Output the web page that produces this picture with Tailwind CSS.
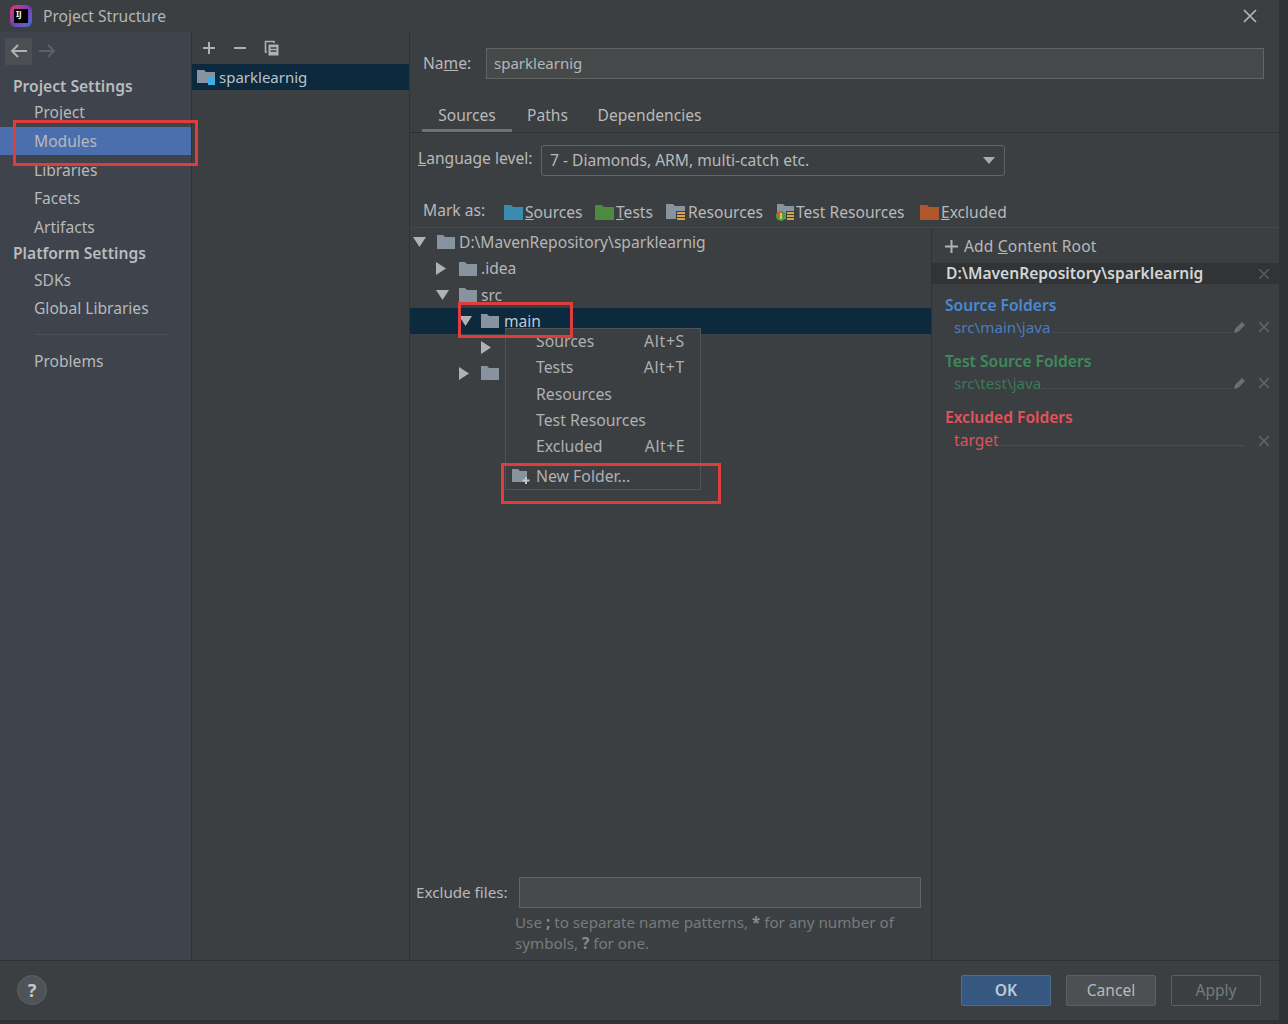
<!DOCTYPE html>
<html lang="en">
<head>
    <meta charset="UTF-8">
    <title>Project Structure</title>
    <script src="https://cdn.jsdelivr.net/npm/@tailwindcss/browser@4"></script>
</head>
<body class="bg-[#2f3133] font-['Noto_Sans','Liberation_Sans',sans-serif] text-[15.6px] leading-[25px] text-[#b8b9ba] overflow-hidden">
<div class="relative w-[1288px] h-[1024px] pr-[9px] pb-[4px]">
<div class="w-full h-full bg-[#3c3f41] flex flex-col">

    <!-- title bar -->
    <div class="h-[32px] flex items-center shrink-0 pl-[10px] pr-[22px]">
        <div class="w-[22px] h-[22px] rounded-[6px] bg-gradient-to-br from-[#e3246c] via-[#7c3bb5] to-[#2f6fd8] flex items-center justify-center">
            <div class="w-[14px] h-[14px] bg-black text-white text-[8px] leading-[10px] font-bold pl-[2px]">IJ</div>
        </div>
        <span class="ml-[11px] text-[#b4b6b7]">Project Structure</span>
        <svg class="ml-auto" width="14" height="14" viewBox="0 0 14 14" fill="none" stroke="#b4b6b7" stroke-width="1.7"><path d="M1 1l12 12M13 1L1 13"/></svg>
    </div>

    <div class="flex-1 flex min-h-0">
        <!-- settings sidebar -->
        <div class="w-[192px] shrink-0 bg-[#3e434c] border-r border-[#323232] flex flex-col">
            <div class="h-[33px] flex items-center pl-[5px] gap-[6px] pt-[5px] shrink-0">
                <div class="w-[27px] h-[27px] bg-[#4b4f54] flex items-center justify-center">
                    <svg width="18" height="14" viewBox="0 0 18 14" fill="none" stroke="#afb1b3" stroke-width="2"><path d="M17 7H2M8 1L2 7l6 6"/></svg>
                </div>
                <svg width="18" height="14" viewBox="0 0 18 14" fill="none" stroke="#5d6165" stroke-width="2"><path d="M1 7h15M10 1l6 6-6 6"/></svg>
            </div>
            <div class="h-[34px] pl-[13px] pt-[9px] font-semibold text-[#b9bbbd] shrink-0">Project Settings</div>
            <div class="h-[26px] pl-[34px] flex items-center shrink-0">Project</div>
            <div class="h-[28px] pl-[34px] flex items-center shrink-0 mt-[2px] bg-[#4b6eaf]">Modules</div>
            <div class="h-[29px] pl-[34px] pt-[1px] flex items-center shrink-0">Libraries</div>
            <div class="h-[28px] pl-[34px] flex items-center shrink-0">Facets</div>
            <div class="h-[29px] pl-[34px] pt-[1px] flex items-center shrink-0">Artifacts</div>
            <div class="h-[25px] pl-[13px] flex items-center font-semibold text-[#b9bbbd] shrink-0">Platform Settings</div>
            <div class="h-[28px] pl-[34px] flex items-center shrink-0">SDKs</div>
            <div class="h-[28px] pl-[34px] flex items-center shrink-0">Global Libraries</div>
            <div class="mt-[12px] ml-[34px] mr-[22px] border-t border-[#4b5059] shrink-0"></div>
            <div class="h-[28px] mt-[12px] pl-[34px] flex items-center shrink-0">Problems</div>
        </div>

        <!-- module list -->
        <div class="w-[218px] shrink-0 border-r border-[#323232] flex flex-col">
            <div class="h-[32px] flex items-center pl-[10px] gap-[17px] shrink-0">
                <svg width="14" height="14" viewBox="0 0 14 14" stroke="#afb1b3" stroke-width="2"><path d="M7 1v12M1 7h12"/></svg>
                <svg width="14" height="14" viewBox="0 0 14 14" stroke="#afb1b3" stroke-width="2"><path d="M1 7h12"/></svg>
                <svg width="16" height="17" viewBox="0 0 16 17" fill="none" stroke="#afb1b3" stroke-width="1.6"><path d="M3 12H1.500V1.500H10V3"/><path d="M4.500 4.500h10v11h-10z" fill="#afb1b3" stroke="none"/><path d="M6.500 8h6M6.500 11h6" stroke="#3c3f41"/></svg>
            </div>
            <div class="h-[26px] bg-[#0d293e] flex items-center pl-[5px] shrink-0">
                <svg width="19" height="16" viewBox="0 0 19 16"><path d="M0 1h7l2 2h9v11H0z" fill="#87939f"/><rect x="11" y="9" width="7" height="7" fill="#3caee8"/></svg>
                <span class="ml-[3px] text-[15px] text-[#b8c4cc]">sparklearnig</span>
            </div>
        </div>

        <!-- module details -->
        <div class="flex-1 min-w-0 flex flex-col">
            <div class="h-[47px] flex items-center pl-[13px] pr-[15px] pt-[15px] shrink-0">
                <span class="w-[63px]">Na<span class="underline">m</span>e:</span>
                <div class="flex-1 h-[31px] bg-[#45494a] border border-[#646464] flex items-center pl-[7px] text-[15px] text-[#b4b7b8]">sparklearnig</div>
            </div>
            <div class="h-[54px] flex items-end pl-[12px] shrink-0 border-b border-[#323232]">
                <div class="w-[90px] h-[38px] pt-[9px] text-center border-b-[3px] border-[#6d7274]">Sources</div>
                <div class="w-[71px] h-[38px] pt-[9px] text-center">Paths</div>
                <div class="w-[133px] h-[38px] pt-[9px] text-center">Dependencies</div>
            </div>
            <div class="h-[54px] flex items-center pl-[8px] shrink-0">
                <span class="w-[123px] pb-[3px]"><span class="underline">L</span>anguage level:</span>
                <div class="w-[464px] h-[31px] bg-[#3c3f41] border border-[#646464] rounded-[3px] flex items-center pl-[8px] pr-[9px] justify-between">
                    <span>7 - Diamonds, ARM, multi-catch etc.</span>
                    <svg width="12" height="7" viewBox="0 0 12 7"><path d="M0 0h12L6 7z" fill="#a9abad"/></svg>
                </div>
            </div>
            <div class="h-[41px] flex items-center pl-[13px] pt-[11px] shrink-0 border-b border-[#44474a]">
                <span class="w-[81px] pb-[5px]">Mark as:</span>
                <svg width="19" height="15" viewBox="0 0 19 15"><path d="M0 0h7l2 2h10v13H0z" fill="#3b8bb0"/></svg>
                <span class="ml-[2px] w-[70px]"><span class="underline">S</span>ources</span>
                <svg width="19" height="15" viewBox="0 0 19 15"><path d="M0 0h7l2 2h10v13H0z" fill="#4c8b3f"/></svg>
                <span class="ml-[2px] w-[50px]"><span class="underline">T</span>ests</span>
                <svg width="20" height="18" viewBox="0 0 20 18"><path d="M0 0h7l2 2h10v13H0z" fill="#87939f"/><rect x="10" y="7" width="9" height="11" fill="#3c3f41"/><path d="M11 9h8M11 12h8M11 15h8" stroke="#d9a343" stroke-width="2"/></svg>
                <span class="ml-[2px] w-[87px]">Resources</span>
                <svg width="20" height="18" viewBox="0 0 20 18"><path d="M2 0h6l2 2h9v13H2z" fill="#87939f"/><rect x="11" y="7" width="8" height="11" fill="#3c3f41"/><path d="M12 9h7M12 12h7M12 15h7" stroke="#d9a343" stroke-width="2"/><circle cx="6" cy="12" r="5" fill="#4c9b45"/><path d="M1 12a5 5 0 0 1 5-5v5z" fill="#d4573a"/><path d="M6 9v6" stroke="#e8c34a" stroke-width="2"/></svg>
                <span class="ml-[1px] w-[124px]">Test Resources</span>
                <svg width="19" height="15" viewBox="0 0 19 15"><path d="M0 0h7l2 2h10v13H0z" fill="#b0562c"/></svg>
                <span class="ml-[2px]"><span class="underline">E</span>xcluded</span>
            </div>

            <div class="flex-1 flex min-h-0">
                <!-- content tree -->
                <div class="w-[522px] shrink-0 border-r border-[#323232] flex flex-col">
                    <div class="flex-1 pt-[1px] text-[#b4b6b7]">
                        <div class="h-[26px] flex items-center pl-[3px]">
                            <svg width="13" height="10" viewBox="0 0 13 10"><path d="M0 0h13L6.500 10z" fill="#afb1b3"/></svg>
                            <svg class="ml-[11px]" width="18" height="14" viewBox="0 0 18 14"><path d="M0 0h6l2 2h10v12H0z" fill="#87939f"/></svg>
                            <span class="ml-[4px]">D:\MavenRepository\sparklearnig</span>
                        </div>
                        <div class="h-[27px] flex items-center pl-[26px]">
                            <svg width="10" height="13" viewBox="0 0 10 13"><path d="M0 0v13l10-6.500z" fill="#afb1b3"/></svg>
                            <svg class="ml-[13px]" width="18" height="14" viewBox="0 0 18 14"><path d="M0 0h6l2 2h10v12H0z" fill="#87939f"/></svg>
                            <span class="ml-[4px]">.idea</span>
                        </div>
                        <div class="h-[26px] flex items-center pl-[26px]">
                            <svg width="13" height="10" viewBox="0 0 13 10"><path d="M0 0h13L6.500 10z" fill="#afb1b3"/></svg>
                            <svg class="ml-[10px]" width="18" height="14" viewBox="0 0 18 14"><path d="M0 0h6l2 2h10v12H0z" fill="#87939f"/></svg>
                            <span class="ml-[4px]">src</span>
                        </div>
                        <div class="h-[26px] bg-[#0d293e] flex items-center pl-[49px]">
                            <svg width="13" height="10" viewBox="0 0 13 10"><path d="M0 0h13L6.500 10z" fill="#afb1b3"/></svg>
                            <svg class="ml-[9px]" width="18" height="14" viewBox="0 0 18 14"><path d="M0 0h6l2 2h10v12H0z" fill="#87939f"/></svg>
                            <span class="ml-[5px] text-[#c0c8cd]">main</span>
                        </div>
                        <div class="h-[26px] flex items-center pl-[71px]">
                            <svg width="10" height="13" viewBox="0 0 10 13"><path d="M0 0v13l10-6.500z" fill="#afb1b3"/></svg>
                        </div>
                        <div class="h-[26px] flex items-center pl-[49px]">
                            <svg width="10" height="13" viewBox="0 0 10 13"><path d="M0 0v13l10-6.500z" fill="#afb1b3"/></svg>
                            <svg class="ml-[12px]" width="18" height="14" viewBox="0 0 18 14"><path d="M0 0h6l2 2h10v12H0z" fill="#87939f"/></svg>
                        </div>
                    </div>
                    <div class="h-[83px] pl-[6px] shrink-0">
                        <div class="flex items-center h-[31px]">
                            <span class="w-[103px] text-[15.2px]">Exclude files:</span>
                            <div class="w-[402px] h-[31px] bg-[#45494a] border border-[#646464]"></div>
                        </div>
                        <div class="pl-[99px] mt-[4px] w-[510px] text-[15.2px] leading-[21px] text-[#787a7c]">Use <b class="text-[#8a8c8e]">;</b> to separate name patterns, <b class="text-[#8a8c8e]">*</b> for any number of<br>symbols, <b class="text-[#8a8c8e]">?</b> for one.</div>
                    </div>
                </div>

                <!-- content roots -->
                <div class="flex-1 min-w-0 pt-[4px]">
                    <div class="h-[28px] flex items-center pl-[13px]">
                        <svg width="13" height="13" viewBox="0 0 13 13" stroke="#afb1b3" stroke-width="2"><path d="M6.500 0v13M0 6.500h13"/></svg>
                        <span class="ml-[6px] tracking-[0.15px]">Add <span class="underline">C</span>ontent Root</span>
                    </div>
                    <div class="h-[21px] mt-[3px] bg-[#313335] flex items-center pl-[14px] pr-[10px] font-semibold text-[#d4d5d6]">
                        <span>D:\MavenRepository\sparklearnig</span>
                        <svg class="ml-auto" width="10" height="10" viewBox="0 0 10 10" stroke="#55585a" stroke-width="1.8"><path d="M0 0l10 10M10 0L0 10"/></svg>
                    </div>
                    <div class="h-[22px] mt-[10px] pl-[13px] flex items-center font-semibold text-[#4a88d8]">Source Folders</div>
                    <div class="h-[22px] pl-[22px] pr-[10px] flex items-center text-[15.2px] text-[#4a7cc0]">
                        <span>src\main\java</span>
                        <div class="flex-1 mx-[2px] mt-[10px] border-t border-dotted border-[#55585a]"></div>
                        <svg width="14" height="14" viewBox="0 0 14 14"><path d="M1 13l1-4 7-7 3 3-7 7z" fill="#6d7072"/></svg>
                        <svg class="ml-[12px]" width="10" height="10" viewBox="0 0 10 10" stroke="#5f6264" stroke-width="1.8"><path d="M0 0l10 10M10 0L0 10"/></svg>
                    </div>
                    <div class="h-[22px] mt-[12px] pl-[13px] flex items-center font-semibold text-[#3e8a5c]">Test Source Folders</div>
                    <div class="h-[22px] pl-[22px] pr-[10px] flex items-center text-[15.2px] text-[#3a7a56]">
                        <span>src\test\java</span>
                        <div class="flex-1 mx-[2px] mt-[10px] border-t border-dotted border-[#55585a]"></div>
                        <svg width="14" height="14" viewBox="0 0 14 14"><path d="M1 13l1-4 7-7 3 3-7 7z" fill="#6d7072"/></svg>
                        <svg class="ml-[12px]" width="10" height="10" viewBox="0 0 10 10" stroke="#5f6264" stroke-width="1.8"><path d="M0 0l10 10M10 0L0 10"/></svg>
                    </div>
                    <div class="h-[22px] mt-[12px] pl-[13px] flex items-center font-semibold text-[#e5535a]">Excluded Folders</div>
                    <div class="h-[24px] pl-[22px] pr-[10px] pt-[1px] flex items-center text-[#d9555b]">
                        <span>target</span>
                        <div class="flex-1 mx-[2px] mt-[10px] border-t border-dotted border-[#55585a]"></div>
                        <svg class="ml-[12px]" width="10" height="10" viewBox="0 0 10 10" stroke="#5f6264" stroke-width="1.8"><path d="M0 0l10 10M10 0L0 10"/></svg>
                    </div>
                </div>
            </div>
        </div>
    </div>

    <!-- footer -->
    <div class="h-[60px] shrink-0 border-t border-[#2f3133] flex items-center pl-[17px] pr-[18px] pb-[1px]">
        <div class="w-[30px] h-[30px] rounded-full bg-[#505355] border border-[#5e6163] flex items-center justify-center text-[18px] text-[#c4c6c8] font-bold">?</div>
        <div class="ml-auto flex gap-[15px]">
            <div class="w-[90px] h-[31px] bg-[#365880] border border-[#4c708c] rounded-[2px] flex items-center justify-center font-semibold text-[#bccad6]">OK</div>
            <div class="w-[90px] h-[31px] bg-[#4c5052] border border-[#5e6060] rounded-[2px] flex items-center justify-center">Cancel</div>
            <div class="w-[90px] h-[31px] border border-[#5e6060] rounded-[2px] flex items-center justify-center text-[#777a7c]">Apply</div>
        </div>
    </div>
</div>

<!-- popup menu over the tree -->
<div class="absolute left-[505px] top-[328px] w-[196px] h-[162px] bg-[#3c3f41] border border-[#515455] text-[#aeb0b1] text-[15.8px]">
    <div class="h-[26px] -mt-[1px] flex items-center justify-between pl-[30px] pr-[15px]"><span>Sources</span><span class="tracking-[0.7px]">Alt+S</span></div>
    <div class="h-[26px] flex items-center justify-between pl-[30px] pr-[15px]"><span>Tests</span><span class="tracking-[0.7px]">Alt+T</span></div>
    <div class="h-[26px] mt-[1px] flex items-center pl-[30px]">Resources</div>
    <div class="h-[26px] flex items-center pl-[30px]">Test Resources</div>
    <div class="h-[26px] flex items-center justify-between pl-[30px] pr-[15px]"><span>Excluded</span><span class="tracking-[0.5px]">Alt+E</span></div>
    <div class="h-[34px] flex items-center pl-[6px]">
        <svg width="18" height="15" viewBox="0 0 18 15"><path d="M0 0h6l2 2h7v11H0z" fill="#87939f"/><path d="M14 8v7M10.500 11.500h7" stroke="#c4c6c8" stroke-width="2"/></svg>
        <span class="ml-[6px]">New Folder...</span>
    </div>
</div>

<!-- red annotation boxes -->
<div class="absolute left-[13px] top-[120px] w-[185px] h-[46px] border-[3px] border-[#e03c3c]"></div>
<div class="absolute left-[458px] top-[302px] w-[115px] h-[36px] border-[3px] border-[#e03c3c]"></div>
<div class="absolute left-[501px] top-[463px] w-[220px] h-[41px] border-[3px] border-[#e03c3c]"></div>
</div>
</body>
</html>
